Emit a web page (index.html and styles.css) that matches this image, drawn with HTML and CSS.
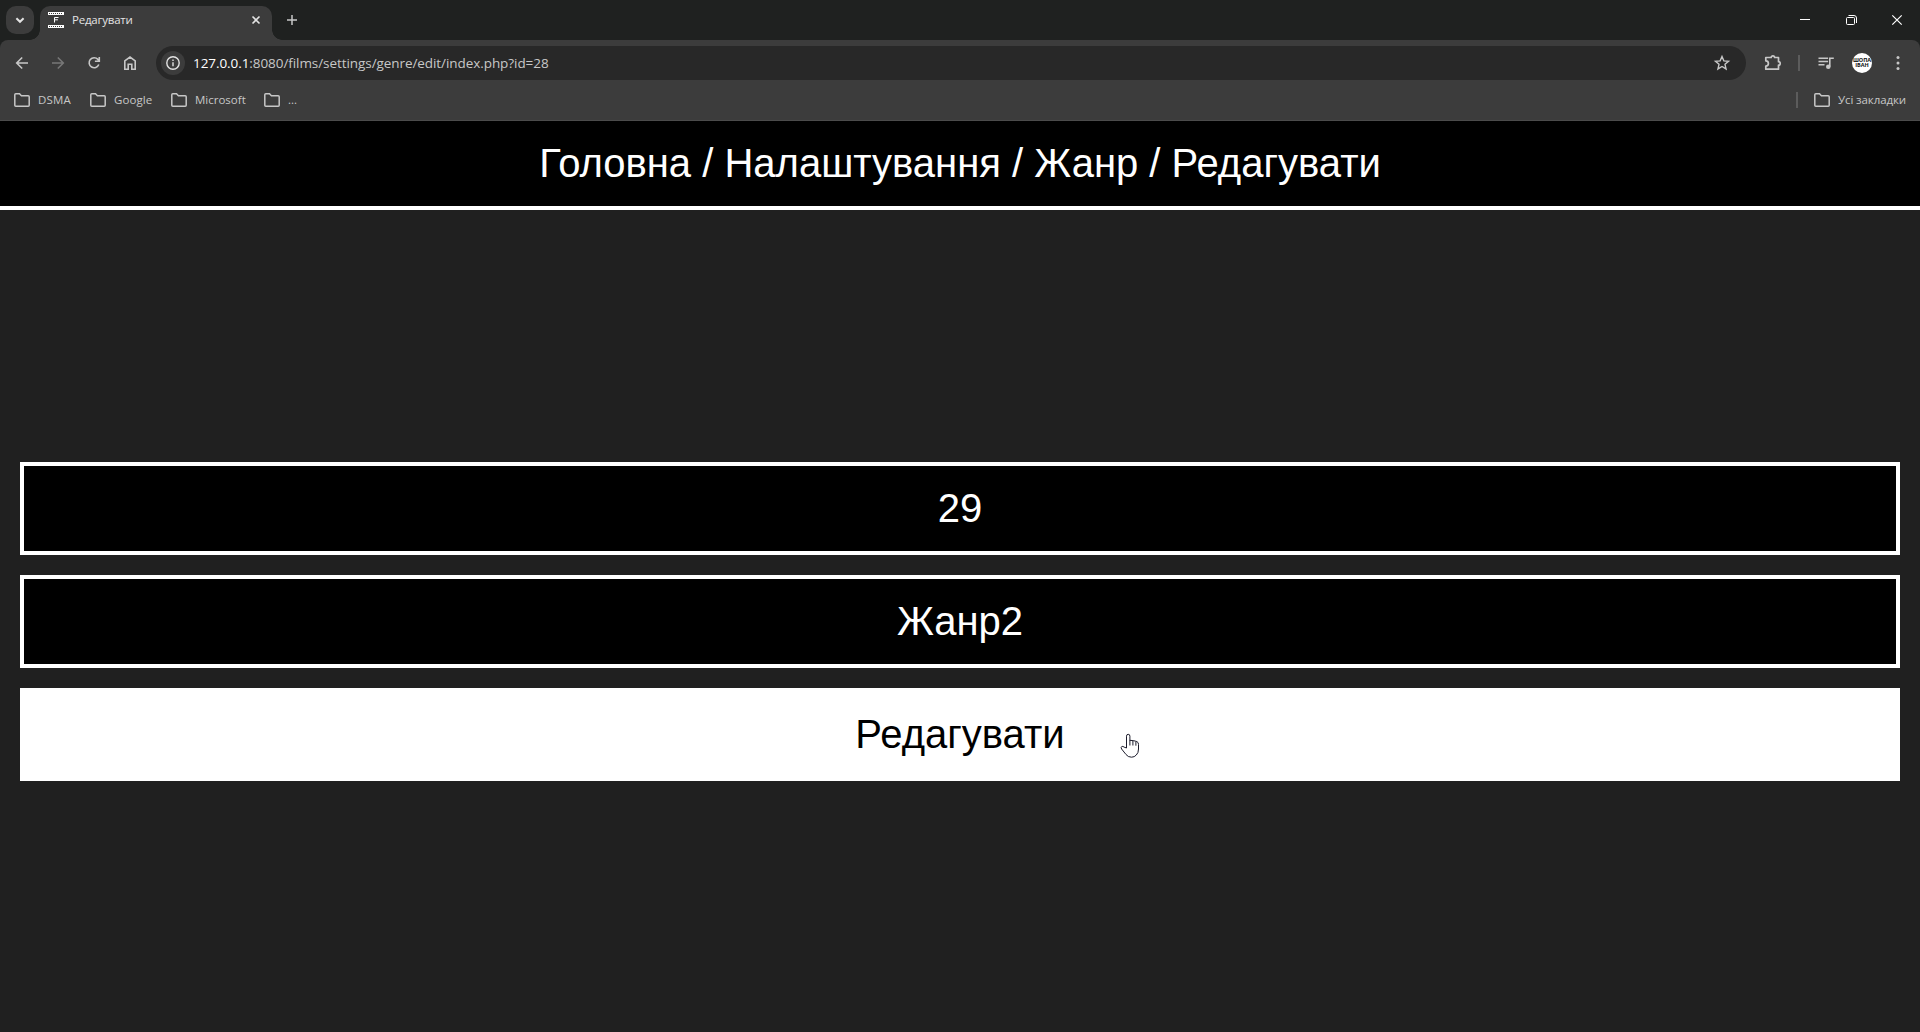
FILE: index.html
```html
<!DOCTYPE html>
<html lang="uk">
<head>
<meta charset="utf-8">
<title>Редагувати</title>
<link rel="stylesheet" href="styles.css">
</head>
<body>
<div class="browser">
  <div class="tabstrip">
    <button class="tab-search" aria-label="Пошук вкладок"><svg width="28" height="28" viewBox="0 0 28 28"><path d="M10.4 12.2 14 15.8l3.6-3.6" stroke-width="2"/></svg></button>
    <div class="tab">
      <svg class="favicon" width="16" height="16" viewBox="0 0 16 16"><path d="M0 .5h16M0 2.5h16M0 13.5h16M0 15.5h16M.5 0v3M.5 13v3M15.5 0v3M15.5 13v3" /><path d="M0 1.5h16M0 14.5h16" stroke-dasharray="1 1"/><path d="M6.5 10.5v-5h4M6.5 7.8h3.4"/></svg>
      <span class="tab-title">Редагувати</span>
      <svg class="tab-close" width="16" height="16" viewBox="0 0 16 16"><path d="m4.500 4.500 7 7m0-7-7 7" stroke-width="1.600"/></svg>
    </div>
    <svg class="new-tab" width="40" height="40" viewBox="0 0 40 40"><path d="M20 15v10M15 20h10" stroke-width="1.5"/></svg>
    <div class="window-controls">
      <svg width="46" height="40" viewBox="0 0 46 40"><path d="M18 19.5h10"/></svg>
      <svg width="46" height="40" viewBox="0 0 46 40"><path d="M20 17.5h5.5q1 0 1 1V23.500q0 1-1 1H19.500q-1 0-1-1V18.500q0-1 1-1zM20.500 15.500H26q2.500 0 2.500 2.500v5" /></svg>
      <svg width="46" height="40" viewBox="0 0 46 40"><path d="m18.300 15.300 9.400 9.400m0-9.400-9.400 9.400" stroke-width="1.2"/></svg>
    </div>
  </div>
  <div class="toolbar">
    <div class="nav">
      <svg width="36" height="34" viewBox="0 0 36 34"><path d="M24 17H13M18.200 11.500 12.700 17l5.500 5.500" stroke-width="1.6"/></svg>
      <svg class="disabled" width="36" height="34" viewBox="0 0 36 34"><path d="M12 17h11M17.800 11.500l5.500 5.500-5.500 5.500" stroke-width="1.6"/></svg>
      <svg width="36" height="34" viewBox="0 0 36 34"><path d="M22.800 18.500a5 5 0 1 1-.9-5.100l1.300 1.400M23.300 11v4.200h-4.400" stroke-width="1.600"/></svg>
      <svg width="36" height="34" viewBox="0 0 36 34"><path d="M12.800 14.800 18 11l5.200 3.800v8.400H19.800v-5h-3.600v5h-3.400z" stroke-width="1.600"/></svg>
    </div>
    <div class="omnibox">
      <span class="site-info"><svg width="16" height="16" viewBox="0 0 16 16"><circle cx="8" cy="8" r="6.200" stroke-width="1.400"/><path d="M8 7.200v4M8 4.600v1.400" stroke-width="1.400"/></svg></span>
      <span class="url"><b>127.0.0.1</b>:8080/films/settings/genre/edit/index.php?id=28</span>
      <svg class="star" width="18" height="18" viewBox="0 0 18 18"><path d="m9 2.500 1.850 4.350 4.700.4-3.570 3.080 1.080 4.600L9 12.470l-4.060 2.460 1.080-4.600L2.450 7.250l4.700-.4z" stroke-width="1.400"/></svg>
    </div>
    <div class="actions">
      <svg width="20" height="20" viewBox="0 0 20 20"><path d="M3.800 4.500H9.200a1.700 1.700 0 0 1 3.400 0H16.500V8.700a1.700 1.700 0 0 1 0 3.400V16.200H3.800V13a2.600 2.600 0 0 0 0-5.200z" stroke-width="1.700" stroke-linejoin="round"/></svg>
      <i class="divider"></i>
      <svg class="media" width="18" height="18" viewBox="0 0 18 18"><path d="M1.500 4.200h9.600M1.500 7.500h9.600M1.500 10.800h6M12.800 12.500V4.200h4" stroke-width="1.600"/><circle class="solid" cx="11.300" cy="12.800" r="2.300"/></svg>
      <span class="avatar"><span>ШОПА</span><span>ІВАН</span></span>
      <svg class="menu" width="16" height="16" viewBox="0 0 16 16"><circle class="solid" cx="8" cy="2.500" r="1.500"/><circle class="solid" cx="8" cy="8" r="1.500"/><circle class="solid" cx="8" cy="13.500" r="1.500"/></svg>
    </div>
  </div>
  <div class="bookmarks">
    <a class="bookmark dsma"><svg width="16" height="14" viewBox="0 0 16 14"><path d="M.8 12.200V1.800q0-1 1-1H5.500l1.900 2h6.800q1 0 1 1v8.400q0 1-1 1H1.800q-1 0-1-1z" stroke-width="1.500"/></svg><span>DSMA</span></a>
    <a class="bookmark google"><svg width="16" height="14" viewBox="0 0 16 14"><path d="M.8 12.200V1.800q0-1 1-1H5.500l1.900 2h6.800q1 0 1 1v8.400q0 1-1 1H1.800q-1 0-1-1z" stroke-width="1.500"/></svg><span>Google</span></a>
    <a class="bookmark microsoft"><svg width="16" height="14" viewBox="0 0 16 14"><path d="M.8 12.200V1.800q0-1 1-1H5.500l1.900 2h6.800q1 0 1 1v8.400q0 1-1 1H1.800q-1 0-1-1z" stroke-width="1.500"/></svg><span>Microsoft</span></a>
    <a class="bookmark"><svg width="16" height="14" viewBox="0 0 16 14"><path d="M.8 12.200V1.800q0-1 1-1H5.500l1.900 2h6.800q1 0 1 1v8.400q0 1-1 1H1.800q-1 0-1-1z" stroke-width="1.500"/></svg><span>...</span></a>
    <div class="all-bookmarks">
      <i class="divider"></i>
      <a class="bookmark"><svg width="16" height="14" viewBox="0 0 16 14"><path d="M.8 12.200V1.800q0-1 1-1H5.500l1.900 2h6.800q1 0 1 1v8.400q0 1-1 1H1.800q-1 0-1-1z" stroke-width="1.500"/></svg><span>Усі закладки</span></a>
    </div>
  </div>
</div>
<header class="header">Головна / Налаштування / Жанр / Редагувати</header>
<main class="form">
  <div class="field">29</div>
  <div class="field">Жанр2</div>
  <div class="field submit">Редагувати</div>
</main>
<svg class="cursor" width="20" height="26" viewBox="0 0 20 26"><path d="M6.500 15V3.200q0-1.900 1.700-1.900t1.700 1.900V7.300q4.500.2 7 1.300 1.600.6 1.600 2.900V16q0 4-2.200 6-1.800 2.200-4.800 2.200-3.500 0-5.500-2.700L1.600 16q-1-1.700.2-2.500 1-.5 2.300.6z"/><path d="M9.900 7v5.500M12.900 8v4.500M15.900 9v3.700"/></svg>
</body>
</html>
```
FILE: styles.css
```css
* { box-sizing: border-box; }
body {
  margin: 0;
  height: 1032px;
  display: flex;
  flex-direction: column;
  overflow: hidden;
  background: #202020;
  color: #fff;
  font: 40px/45px "Liberation Sans", Arial, sans-serif;
}
svg { display: block; flex: none; fill: none; stroke: #c7c7c7; }
.solid { fill: #c7c7c7; stroke: none; }

.browser {
  flex: none;
  height: 121px;
  background: #1f2120;
  font: 12px/16px "Open Sans", "Noto Sans", sans-serif;
  color: #c7c7c7;
}
.tabstrip { display: flex; height: 40px; }
.tab-search {
  width: 28px;
  height: 28px;
  margin: 6px 6px 0;
  padding: 0;
  border: 0;
  border-radius: 10px;
  background: #3c3c3c;
}
.tab-search svg { stroke: #e3e3e3; }
.tab {
  position: relative;
  display: flex;
  align-items: center;
  width: 232px;
  height: 34px;
  margin-top: 6px;
  padding: 0 8px 6px;
  border-radius: 10px 10px 0 0;
  background: #3c3c3c;
  color: #e3e3e3;
}
.tab::before, .tab::after {
  content: "";
  position: absolute;
  bottom: 0;
  width: 10px;
  height: 10px;
}
.tab::before { left: -10px; background: radial-gradient(circle at 0 0, transparent 9.5px, #3c3c3c 10px); }
.tab::after { right: -10px; background: radial-gradient(circle at 100% 0, transparent 9.5px, #3c3c3c 10px); }
.favicon { stroke: #fff; }
.tab-title { margin-left: 8px; font-size: 11.5px; letter-spacing: -.22px; }
.tab-close { margin-left: auto; stroke: #e3e3e3; }
.new-tab { stroke: #c7c7c7; }
.window-controls { display: flex; margin-left: auto; }
.window-controls svg { stroke: #fff; }

.toolbar {
  display: flex;
  align-items: center;
  height: 46px;
  padding: 0 14px 0 4px;
  border-radius: 8px 8px 0 0;
  background: #3c3c3c;
}
.nav { display: flex; width: 152px; }
.disabled { stroke: #777; }
.omnibox {
  display: flex;
  align-items: center;
  width: 1590px;
  height: 34px;
  padding: 0 15px 0 5px;
  border-radius: 17px;
  background: #282828;
}
.site-info {
  display: flex;
  align-items: center;
  justify-content: center;
  width: 24px;
  height: 24px;
  border-radius: 50%;
  background: #3c3c3c;
}
.site-info svg { stroke: #e3e3e3; }
.url { margin-left: 8px; font-size: 13.500px; letter-spacing: -.07px; white-space: nowrap; }
.url b { font-weight: 400; color: #fff; }
.star { margin-left: auto; }
.actions { display: flex; align-items: center; margin-left: 16px; }
.divider { width: 2px; height: 16px; background: #5c5c5c; }
.actions .divider { margin-left: 16px; }
.media { margin-left: 17px; }
.avatar {
  display: flex;
  flex-direction: column;
  align-items: center;
  justify-content: center;
  width: 20px;
  height: 20px;
  margin-left: 17px;
  border-radius: 50%;
  background: #fff;
  color: #111;
  font: bold 5.500px/5px "Open Sans", sans-serif;
}
.menu { margin-left: 18px; }

.bookmarks {
  display: flex;
  align-items: center;
  height: 35px;
  padding: 0 14px 7px;
  border-bottom: 1px solid #4b4b4b;
  background: #3c3c3c;
}
.bookmark { display: flex; align-items: center; gap: 8px; font-size: 11.500px; white-space: nowrap; }
.bookmark svg { height: 14px; }
.dsma { width: 76px; letter-spacing: .2px; }
.google { width: 81px; letter-spacing: .1px; }
.microsoft { width: 93px; }
.all-bookmarks { display: flex; align-items: center; gap: 16px; margin-left: auto; }
.all-bookmarks span { width: 68px; letter-spacing: -.1px; }

.header {
  flex: none;
  height: 89px;
  padding: 20px;
  border-bottom: 4px solid #fff;
  background: #000;
  text-align: center;
}
.form {
  flex: 1;
  display: flex;
  flex-direction: column;
  justify-content: center;
  gap: 20px;
  padding: 1px 20px 0;
}
.field {
  height: 93px;
  padding: 20px;
  border: 4px solid #fff;
  background: #000;
  text-align: center;
}
.submit { background: #fff; color: #000; }
.cursor { position: absolute; left: 1120px; top: 733px; fill: #fff; stroke: #1b1b2b; }
```
